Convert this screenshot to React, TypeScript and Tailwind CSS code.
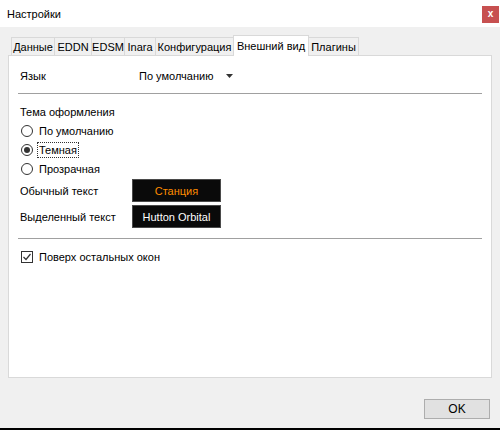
import React from "react";

const font = { fontFamily: '"Liberation Sans", Arial, sans-serif' };

function Tab({ label, w, active }: { label: string; w: string; active?: boolean }) {
  if (active) {
    return (
      <div
        className={`${w} h-[21px] -mb-px -ml-px relative z-10 bg-white border border-b-0 border-[#d9d9d9] flex items-center justify-center leading-[16px] pb-[1px] whitespace-nowrap`}
      >
        {label}
      </div>
    );
  }
  return (
    <div
      className={`${w} h-[18px] -ml-px bg-[#f0f0f0] border border-b-0 border-[#d9d9d9] flex items-center justify-center leading-[16px] pt-[1px] whitespace-nowrap`}
    >
      {label}
    </div>
  );
}

function Radio({ label, checked, focus }: { label: string; checked?: boolean; focus?: boolean }) {
  return (
    <div className="h-[19px] flex items-center pl-[12px]">
      <div className="w-[12px] h-[12px] rounded-full border border-[#333333] bg-white flex items-center justify-center">
        {checked && <div className="w-[6px] h-[6px] rounded-full bg-[#333333]" />}
      </div>
      <span
        className={`ml-[5px] leading-[14px] px-[1px] ${focus ? "outline outline-1 outline-dotted outline-[#333333]" : ""}`}
      >
        {label}
      </span>
    </div>
  );
}

export default function App() {
  return (
    <div className="w-[500px] h-[430px] bg-[#f0f0f0] flex flex-col text-[11px] text-black" style={font}>
      <div className="h-[27px] bg-white flex items-start justify-between pl-[7px] pr-[1px]">
        <span className="mt-[6px] leading-[16px]">Настройки</span>
        <div className="mt-[6px] w-[17px] h-[17px] bg-[#c75050] flex items-center justify-center text-white text-[10px] font-bold leading-none pb-[2px]">
          x
        </div>
      </div>
      <div className="px-[8px] pt-[8px]">
        <div className="h-[20px] flex items-end pl-[4px]">
          <Tab label="Данные" w="w-[44px]" />
          <Tab label="EDDN" w="w-[38px]" />
          <Tab label="EDSM" w="w-[34px]" />
          <Tab label="Inara" w="w-[32px]" />
          <Tab label="Конфигурация" w="w-[79px]" />
          <Tab label="Внешний вид" w="w-[76px]" active />
          <Tab label="Плагины" w="w-[51px]" />
        </div>
        <div className="h-[323px] bg-white border border-[#d9d9d9] flex flex-col">
          <div className="mt-[12px] h-[16px] flex items-center pl-[11px] leading-[16px]">
            <span className="w-[119px]">Язык</span>
            <span>По умолчанию</span>
            <svg className="ml-[13px]" width="7" height="4" viewBox="0 0 7 4">
              <path d="M0 0 L7 0 L3.5 4 Z" fill="#333333" />
            </svg>
          </div>
          <div className="mt-[9px] mx-[9px] h-[2px] border-t border-[#a0a0a0] border-b border-b-white bg-[#e3e3e3]" />
          <div className="mt-[9px] h-[16px] pl-[11px] leading-[16px]">Тема оформления</div>
          <div className="mt-[1px] flex flex-col">
            <Radio label="По умолчанию" />
            <Radio label="Темная" checked focus />
            <Radio label="Прозрачная" />
          </div>
          <div className="mt-[1px] h-[23px] flex items-center pl-[11px]">
            <span className="w-[112px] leading-[16px]">Обычный текст</span>
            <div className="w-[89px] h-[23px] bg-[#0a0a0a] border border-[#4a4a4a] flex items-center justify-center text-[#ff8c00] leading-[16px]">
              Станция
            </div>
          </div>
          <div className="mt-[3px] h-[23px] flex items-center pl-[11px]">
            <span className="w-[112px] leading-[16px]">Выделенный текст</span>
            <div className="w-[89px] h-[23px] bg-[#0a0a0a] border border-[#4a4a4a] flex items-center justify-center text-white leading-[16px]">
              Hutton Orbital
            </div>
          </div>
          <div className="mt-[10px] mx-[9px] h-[2px] border-t border-[#a0a0a0] border-b border-b-white bg-[#e3e3e3]" />
          <div className="mt-[9px] h-[16px] flex items-center pl-[12px]">
            <div className="w-[12px] h-[12px] border border-[#333333] bg-white flex items-center justify-center">
              <svg width="10" height="10" viewBox="0 0 10 10">
                <path d="M1.5 5 L4 7.5 L8.5 2" fill="none" stroke="#333333" strokeWidth="1.2" />
              </svg>
            </div>
            <span className="ml-[6px] leading-[16px]">Поверх остальных окон</span>
          </div>
        </div>
      </div>
      <div className="flex justify-end pr-[10px] pt-[21px]">
        <div className="w-[66px] h-[20px] bg-[#e1e1e1] border border-[#adadad] flex items-center justify-center leading-[16px] text-[12px]">
          OK
        </div>
      </div>
      <div className="flex-1" />
      <div className="h-[2px] bg-black" />
    </div>
  );
}
